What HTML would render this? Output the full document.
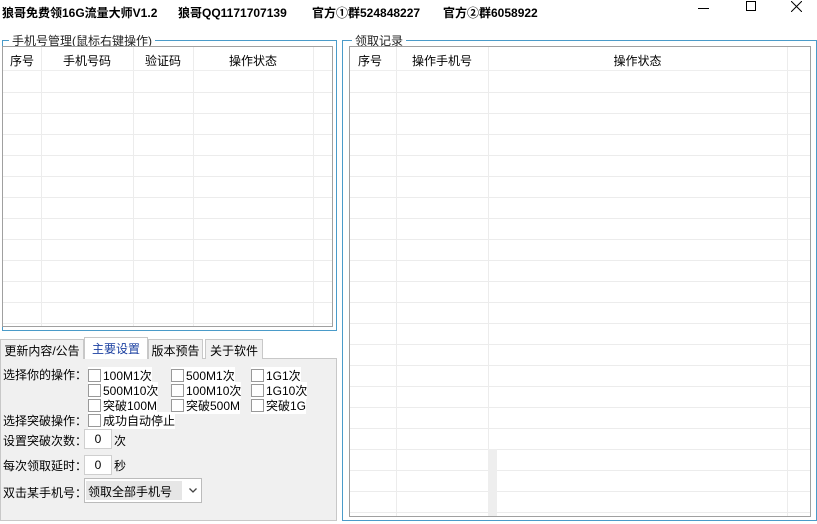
<!DOCTYPE html>
<html><head><meta charset="utf-8"><style>
*{margin:0;padding:0;box-sizing:border-box}
body{width:817px;height:524px;background:#fff;position:relative;overflow:hidden;font-family:"Liberation Sans","Noto Sans CJK SC",sans-serif;font-size:12px;color:#000}
.a{position:absolute;white-space:nowrap}
.t{font-weight:bold;font-size:12px;top:4px}
.grp{position:absolute;border:1px solid #4a9bc9}
.lg{position:absolute;background:#fff;padding:0 3px;top:-9px;font-size:12px;color:#222}
.tbl{position:absolute;border:1px solid #a0a0a0;background:#fff;overflow:hidden}
.hd{position:absolute;left:0;right:0;top:0;height:24px;border-bottom:1px solid #eee}
.hc{position:absolute;top:5px;text-align:center;font-size:12px}
.vl{position:absolute;top:0;bottom:0;width:1px;background:#ececec}
.hl{position:absolute;left:0;right:0;height:1px;background:#ececec}
.cb{display:inline-block;width:13px;height:13px;border:1px solid #999;background:#fff;vertical-align:-2px;margin-right:2px}
.lbl{background:#fff}
.tab{position:absolute;top:339px;height:20px;border:1px solid #c8c8c8;border-bottom:none;background:#f0f0f0;padding:2px 0;font-size:12px;white-space:nowrap;text-align:center;overflow:hidden}
.inp{position:absolute;width:28px;height:20px;border:1px solid #cfcfcf;background:#fff;text-align:center;line-height:18px}
</style></head><body>
<div class="a t" style="left:2px">狼哥免费领16G流量大师V1.2</div>
<div class="a t" style="left:178px">狼哥QQ1171707139</div>
<div class="a t" style="left:312px">官方①群524848227</div>
<div class="a t" style="left:443px">官方②群6058922</div>
<div class="a" style="left:698px;top:8px;width:11px;height:1px;background:#000"></div>
<div class="a" style="left:746px;top:1px;width:10px;height:10px;border:1px solid #000"></div>
<svg class="a" style="left:791px;top:1px" width="11" height="11"><path d="M0 0L11 11M11 0L0 11" stroke="#000" stroke-width="1"/></svg>

<div class="grp" style="left:2px;top:40px;width:335px;height:291px">
<div class="lg" style="left:6px">手机号管理(鼠标右键操作)</div></div>
<div class="tbl" style="left:2px;top:46px;width:331px;height:281px">
<div class="vl" style="left:38px"></div><div class="vl" style="left:130px"></div><div class="vl" style="left:190px"></div><div class="vl" style="left:310px"></div>
<div class="hl" style="top:45px"></div><div class="hl" style="top:66px"></div><div class="hl" style="top:87px"></div><div class="hl" style="top:108px"></div><div class="hl" style="top:129px"></div><div class="hl" style="top:150px"></div><div class="hl" style="top:171px"></div><div class="hl" style="top:192px"></div><div class="hl" style="top:213px"></div><div class="hl" style="top:234px"></div><div class="hl" style="top:255px"></div><div class="hl" style="top:276px"></div>
<div class="hd" style="background:#fff"><div class="hc" style="left:0;width:38px">序号</div><div class="hc" style="left:38px;width:92px">手机号码</div><div class="hc" style="left:130px;width:60px">验证码</div><div class="hc" style="left:190px;width:120px">操作状态</div>
<div class="vl" style="left:38px"></div><div class="vl" style="left:130px"></div><div class="vl" style="left:190px"></div><div class="vl" style="left:310px"></div></div>
</div>

<div class="grp" style="left:342px;top:40px;width:475px;height:481px">
<div class="lg" style="left:9px">领取记录</div></div>
<div class="tbl" style="left:349px;top:46px;width:462px;height:471px">
<div class="vl" style="left:46px"></div><div class="vl" style="left:138px"></div><div class="vl" style="left:437px"></div>
<div class="hl" style="top:45px"></div><div class="hl" style="top:66px"></div><div class="hl" style="top:87px"></div><div class="hl" style="top:108px"></div><div class="hl" style="top:129px"></div><div class="hl" style="top:150px"></div><div class="hl" style="top:171px"></div><div class="hl" style="top:192px"></div><div class="hl" style="top:213px"></div><div class="hl" style="top:234px"></div><div class="hl" style="top:255px"></div><div class="hl" style="top:276px"></div><div class="hl" style="top:297px"></div><div class="hl" style="top:318px"></div><div class="hl" style="top:339px"></div><div class="hl" style="top:360px"></div><div class="hl" style="top:381px"></div><div class="hl" style="top:402px"></div><div class="hl" style="top:423px"></div><div class="hl" style="top:444px"></div><div class="hl" style="top:465px"></div>
<div class="a" style="left:138px;top:402px;width:9px;height:70px;background:#eee"></div>
<div class="hd" style="background:#fff"><div class="hc" style="left:0;width:40px">序号</div><div class="hc" style="left:46px;width:92px">操作手机号</div><div class="hc" style="left:138px;width:299px">操作状态</div>
<div class="vl" style="left:46px"></div><div class="vl" style="left:138px"></div><div class="vl" style="left:437px"></div></div>
</div>

<div class="a" style="left:0;top:358px;width:337px;height:163px;background:#f0f0f0;border:1px solid #c8c8c8"></div>
<div class="tab" style="left:0;width:84px">更新内容/公告</div>
<div class="tab" style="left:84px;top:337px;height:22px;width:64px;background:#fff;color:#1a3fa0">主要设置</div>
<div class="tab" style="left:148px;width:55px">版本预告</div>
<div class="tab" style="left:205px;width:58px">关于软件</div>

<div class="a" style="left:3px;top:366px">选择你的操作：</div>
<div class="a lbl" style="left:88px;top:367px"><span class="cb"></span>100M1次</div>
<div class="a lbl" style="left:171px;top:367px"><span class="cb"></span>500M1次</div>
<div class="a lbl" style="left:251px;top:367px"><span class="cb"></span>1G1次</div>
<div class="a lbl" style="left:88px;top:382px"><span class="cb"></span>500M10次</div>
<div class="a lbl" style="left:171px;top:382px"><span class="cb"></span>100M10次</div>
<div class="a lbl" style="left:251px;top:382px"><span class="cb"></span>1G10次</div>
<div class="a lbl" style="left:88px;top:397px"><span class="cb"></span>突破100M</div>
<div class="a lbl" style="left:171px;top:397px"><span class="cb"></span>突破500M</div>
<div class="a lbl" style="left:251px;top:397px"><span class="cb"></span>突破1G</div>
<div class="a" style="left:3px;top:412px">选择突破操作：</div>
<div class="a lbl" style="left:88px;top:412px"><span class="cb"></span>成功自动停止</div>
<div class="a" style="left:3px;top:432px">设置突破次数：</div>
<div class="inp" style="left:84px;top:429px">0</div>
<div class="a" style="left:114px;top:432px">次</div>
<div class="a" style="left:3px;top:457px">每次领取延时：</div>
<div class="inp" style="left:84px;top:455px">0</div>
<div class="a" style="left:114px;top:457px">秒</div>
<div class="a" style="left:3px;top:484px">双击某手机号：</div>
<div class="a" style="left:84px;top:478px;width:118px;height:25px;border:1px solid #bbb;background:#fff"><div class="a" style="left:1px;top:2px;width:96px;height:19px;background:#e6e6e6;padding:2px 2px">领取全部手机号</div><svg class="a" style="left:104px;top:9px" width="8" height="6"><path d="M0.5 0.5L4 4L7.5 0.5" stroke="#444" fill="none" stroke-width="1.3"/></svg></div>
</body></html>
